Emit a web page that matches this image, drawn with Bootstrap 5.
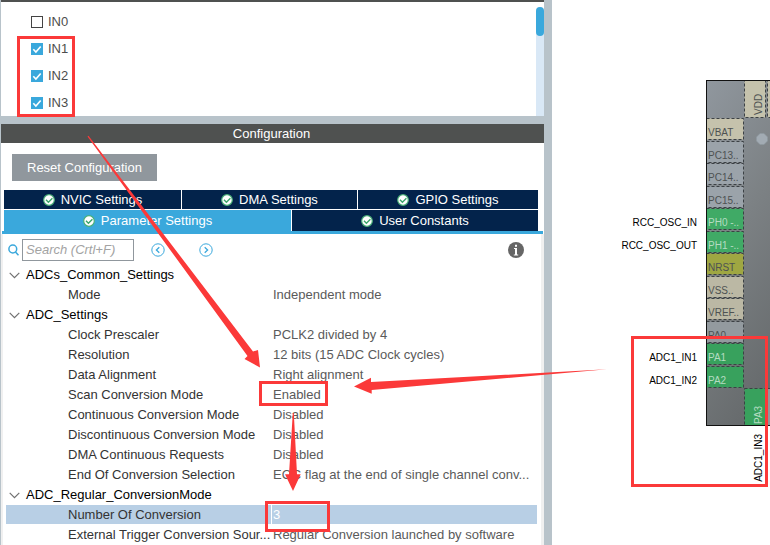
<!DOCTYPE html>
<html lang="en">
<head>
<meta charset="utf-8">
<meta name="viewport" content="width=device-width, initial-scale=1">
<title>ADC1 Configuration</title>
<link href="https://cdn.jsdelivr.net/npm/bootstrap@5.3.0/dist/css/bootstrap.min.css" rel="stylesheet">
<style>
  :root { --blue: #3aa8dc; --navy: #03234b; --frame: #b8c3ca; --bar: #4f5150; }
  body { font-family: "Liberation Sans", Arial, sans-serif; font-size: 13px; line-height: 20px; color: #4d4d4d; background: #fff; }
  .app { min-height: 100vh; }
  .config { border-left: 1px solid var(--frame); border-right: 8px solid var(--frame); }
  .channels { border-top: 2px solid var(--bar); border-bottom: 8px solid var(--frame); }
  .channel-list { padding: 6px 0 0 30px; }
  .channel { height: 27px; gap: 5px; }
  .channel .form-check-input { width: 12px; height: 12px; border: 1px solid #444; border-radius: 0; background-color: #fff; }
  .channel .form-check-input:checked { border-color: var(--blue); background-color: var(--blue);
    background-size: 12px 12px; background-image: url("data:image/svg+xml,%3csvg xmlns='http://www.w3.org/2000/svg' viewBox='0 0 12 12'%3e%3cpath fill='none' stroke='%23fff' stroke-width='1.6' d='M2.3 6.2l2.6 2.8 4.8-5.6'/%3e%3c/svg%3e"); }
  .scroll-track { width: 8px; margin-top: 5px; background: #d9e8f6; border-radius: 4px 4px 0 0; }
  .scroll-thumb { height: 29px; background: var(--blue); border-radius: 4px; }
  .title-bar { background: var(--bar); height: 19px; line-height: 19px; font-size: 13px; padding-right: 2px; }
  .reset { margin: 11px 0 9px 11px; height: 27px; padding: 0 15px; border: 0; border-radius: 0; background: #90979d; color: #fff; font-size: 13px; line-height: 27px; }
  .tab-grid { padding: 0 6px 0 3px; gap: 1px; }
  .tab-line { gap: 1px; }
  .tab-line button { border: 0; border-radius: 0; padding: 0; height: 19px; line-height: 19px; gap: 6px; background: var(--navy); color: #fff; font-size: 13px; }
  .tab-line .nvic { flex: 177 1 0; }
  .tab-line .dma { flex: 175 1 0; }
  .tab-line .gpio { flex: 180 1 0; }
  .tab-line.lower button { height: 21px; line-height: 21px; flex: 246 1 0; }
  .tab-line.lower button.active { flex: 287 1 0; background: var(--blue); }
  .tab-rule { height: 3px; margin: 0 1px; background: var(--blue); }
  .pane { border-left: 2px solid #f0f0f0; border-right: 3px solid #f0f0f0; padding: 0 4px 0 3px; }
  .tools { height: 31px; padding: 0 13px 0 2px; }
  .tools input { width: 112px; height: 22px; padding: 0 3px; border: 1px solid #90979d; border-radius: 0; font-size: 13px; font-style: italic; margin-left: 3px; }
  .tools input::placeholder { color: #a3a3a3; opacity: 1; }
  .tools button { border: 0; padding: 0; background: none; line-height: 0; }
  .prev { margin-left: 17px; }
  .next { margin-left: 34px; }
  .params { table-layout: fixed; width: 100%; margin: 0; border-collapse: separate; border-spacing: 0; }
  .params tr { height: 20px; }
  .params th, .params td { padding: 0; height: 20px; line-height: 20px; font-weight: 400; white-space: nowrap; }
  .params th[scope=row] { padding-left: 62px; color: #333; }
  .params td { color: #5a5a5a; padding-left: 2px; }
  .params .group { color: #000; }
  .group svg { margin: 0 6px 0 3px; vertical-align: 0; }
  .params .picked > * { background: #b8cfe5; background-clip: padding-box; border-bottom: 1px solid #fff; line-height: 19px; }
  .params .picked td { color: #fff; border-left: 1px solid #fff; padding-left: 1px; }
  .pinout { width: 218px; }
  .pinout text { font-size: 10px; }
  .marks { top: 0; left: 0; pointer-events: none; }
</style>
<script src="https://cdn.jsdelivr.net/npm/bootstrap@5.3.0/dist/js/bootstrap.bundle.min.js"></script>
</head>
<body>
<svg class="d-none" xmlns="http://www.w3.org/2000/svg">
  <symbol id="ok" viewBox="0 0 12 12"><circle cx="6" cy="6" r="5.3" fill="#fff" stroke="#4bb078" stroke-width="1.2"/><path d="M3 5.8l2.4 2.4 4-4" fill="none" stroke="#3ba56a" stroke-width="1.4"/></symbol>
  <symbol id="chev" viewBox="0 0 11 7"><path d="M.7 .8l4.8 4.9L10.300 .8" fill="none" stroke="#707070" stroke-width="1.2"/></symbol>
</svg>
<main class="app d-flex position-relative overflow-hidden">
  <section class="config flex-grow-1 d-flex flex-column">
    <div class="channels d-flex">
      <div class="channel-list flex-grow-1">
        <div class="channel d-flex align-items-center"><input class="form-check-input m-0" type="checkbox" id="in0"><label for="in0">IN0</label></div>
        <div class="channel d-flex align-items-center"><input class="form-check-input m-0" type="checkbox" id="in1" checked><label for="in1">IN1</label></div>
        <div class="channel d-flex align-items-center"><input class="form-check-input m-0" type="checkbox" id="in2" checked><label for="in2">IN2</label></div>
        <div class="channel d-flex align-items-center"><input class="form-check-input m-0" type="checkbox" id="in3" checked><label for="in3">IN3</label></div>
      </div>
      <div class="scroll-track"><div class="scroll-thumb"></div></div>
    </div>
    <h1 class="title-bar text-white text-center fw-normal m-0">Configuration</h1>
    <div><button type="button" class="reset btn">Reset Configuration</button></div>
    <div class="tab-grid d-flex flex-column">
      <div class="tab-line d-flex">
        <button type="button" class="nvic d-flex align-items-center justify-content-center"><svg width="12" height="12"><use href="#ok"/></svg>NVIC Settings</button>
        <button type="button" class="dma d-flex align-items-center justify-content-center"><svg width="12" height="12"><use href="#ok"/></svg>DMA Settings</button>
        <button type="button" class="gpio d-flex align-items-center justify-content-center"><svg width="12" height="12"><use href="#ok"/></svg>GPIO Settings</button>
      </div>
      <div class="tab-line lower d-flex">
        <button type="button" class="active d-flex align-items-center justify-content-center"><svg width="12" height="12"><use href="#ok"/></svg>Parameter Settings</button>
        <button type="button" class="d-flex align-items-center justify-content-center"><svg width="12" height="12"><use href="#ok"/></svg>User Constants</button>
      </div>
    </div>
    <div class="tab-rule"></div>
    <div class="pane flex-grow-1">
      <div class="tools d-flex align-items-center">
        <svg width="11" height="12" viewBox="0 0 11 12" fill="none" stroke="#3aa8dc" stroke-width="1.5"><circle cx="4.800" cy="5" r="3.900"/><path d="M7.500 7.900l3 3.300"/></svg>
        <input type="text" aria-label="Search" placeholder="Search (Crtl+F)">
        <button type="button" class="prev" aria-label="Previous"><svg width="14" height="14" viewBox="0 0 14 14" fill="none" stroke="#3aa8dc"><circle cx="7" cy="7" r="6.200"/><path d="M8.300 4.200L5.400 7l2.900 2.800" stroke-width="1.3"/></svg></button>
        <button type="button" class="next" aria-label="Next"><svg width="14" height="14" viewBox="0 0 14 14" fill="none" stroke="#3aa8dc"><circle cx="7" cy="7" r="6.200"/><path d="M5.700 4.200L8.600 7 5.700 9.800" stroke-width="1.3"/></svg></button>
        <button type="button" class="ms-auto" aria-label="Information"><svg width="16" height="16" viewBox="0 0 16 16"><circle cx="8" cy="8" r="8" fill="#666"/><path d="M7 2.700h2v2H7zM6 6h3v6.500h1.200v.9H5.800v-.9H7V7H6z" fill="#fff"/></svg></button>
      </div>
      <table class="params">
        <colgroup><col style="width:265px"><col></colgroup>
        <tbody>
          <tr><th class="group" colspan="2"><svg width="11" height="7"><use href="#chev"/></svg>ADCs_Common_Settings</th></tr>
          <tr><th scope="row">Mode</th><td>Independent mode</td></tr>
          <tr><th class="group" colspan="2"><svg width="11" height="7"><use href="#chev"/></svg>ADC_Settings</th></tr>
          <tr><th scope="row">Clock Prescaler</th><td>PCLK2 divided by 4</td></tr>
          <tr><th scope="row">Resolution</th><td>12 bits (15 ADC Clock cycles)</td></tr>
          <tr><th scope="row">Data Alignment</th><td>Right alignment</td></tr>
          <tr><th scope="row">Scan Conversion Mode</th><td>Enabled</td></tr>
          <tr><th scope="row">Continuous Conversion Mode</th><td>Disabled</td></tr>
          <tr><th scope="row">Discontinuous Conversion Mode</th><td>Disabled</td></tr>
          <tr><th scope="row">DMA Continuous Requests</th><td>Disabled</td></tr>
          <tr><th scope="row">End Of Conversion Selection</th><td>EOC flag at the end of single channel conv...</td></tr>
          <tr><th class="group" colspan="2"><svg width="11" height="7"><use href="#chev"/></svg>ADC_Regular_ConversionMode</th></tr>
          <tr class="picked"><th scope="row">Number Of Conversion</th><td>3</td></tr>
          <tr><th scope="row">External Trigger Conversion Sour...</th><td>Regular Conversion launched by software</td></tr>
        </tbody>
      </table>
    </div>
  </section>
  <section class="pinout flex-shrink-0" aria-label="Pinout view">
    <svg class="d-block" width="218" height="545" viewBox="552 0 218 545">
      <defs><linearGradient id="body" x1="0" y1="0" x2=".35" y2="1"><stop offset="0" stop-color="#90979e"/><stop offset=".5" stop-color="#7c8184"/><stop offset="1" stop-color="#686c6e"/></linearGradient></defs>
      <rect x="706.5" y="80.5" width="80" height="345" fill="url(#body)" stroke="#111"/>
      <path d="M760 133.500h4l3.500 3.500v4l-3.500 3.500h-4l-3.500-3.500v-4z" fill="#a2abb3" stroke="#8f989f" stroke-width=".6"/>
      <g stroke="#3c4145" stroke-dasharray="3 2">
        <rect x="706.5" y="118.500" width="37" height="21" fill="#c5c2ac"/>
        <rect x="706.5" y="141.500" width="37" height="21" fill="#9ba3aa"/>
        <rect x="706.5" y="163.500" width="37" height="21" fill="#9ba3aa"/>
        <rect x="706.5" y="186.500" width="37" height="21" fill="#9ba3aa"/>
        <rect x="706.5" y="208.500" width="37" height="21" fill="#40aa66"/>
        <rect x="706.5" y="231.500" width="37" height="21" fill="#40aa66"/>
        <rect x="706.5" y="253.500" width="37" height="21" fill="#9fa742"/>
        <rect x="706.5" y="276.500" width="37" height="21" fill="#bbb8a4"/>
        <rect x="706.5" y="298.500" width="37" height="21" fill="#bbb8a4"/>
        <rect x="706.5" y="321.500" width="37" height="21" fill="#939a9f"/>
        <rect x="706.5" y="343.500" width="37" height="21" fill="#38a15d"/>
        <rect x="706.5" y="366.500" width="37" height="21" fill="#38a15d"/>
        <rect x="744.5" y="80.500" width="21" height="37" fill="#c5c2ac"/>
        <rect x="767.5" y="80.500" width="21" height="37" fill="#c5c2ac"/>
        <rect x="744.5" y="388.500" width="21" height="37" fill="#38a15d"/>
        <rect x="767.5" y="388.500" width="21" height="37" fill="#92979a"/>
      </g>
      <g fill="#4e5252">
        <text x="708" y="136">VBAT</text><text x="708" y="159">PC13..</text><text x="708" y="181">PC14..</text><text x="708" y="204">PC15..</text>
        <text x="708" y="271">NRST</text><text x="708" y="294">VSS..</text><text x="708" y="316">VREF..</text><text x="708" y="339">PA0</text>
        <text transform="translate(762 115) rotate(-90)">VDD</text>
      </g>
      <g fill="#b4dcc1">
        <text x="708" y="226">PH0 -..</text><text x="708" y="249">PH1 -..</text><text x="708" y="361">PA1</text><text x="708" y="384">PA2</text>
        <text transform="translate(762 424) rotate(-90)">PA3</text>
      </g>
      <g fill="#000" text-anchor="end">
        <text x="697" y="226">RCC_OSC_IN</text><text x="697" y="249">RCC_OSC_OUT</text><text x="697" y="361">ADC1_IN1</text><text x="697" y="384">ADC1_IN2</text>
        <text transform="translate(762 434) rotate(-90)">ADC1_IN3</text>
      </g>
      <path d="M706.500 80v346M706 80.500h64M706 425.500h64" stroke="#111"/>
    </svg>
  </section>
  <svg class="marks position-absolute" width="770" height="545" viewBox="0 0 770 545" aria-hidden="true">
    <g fill="none" stroke="#fb3939" stroke-width="3">
      <rect x="18.500" y="37.500" width="55" height="78"/>
      <rect x="260.500" y="382.500" width="66" height="22"/>
      <rect x="266.500" y="502.500" width="62" height="28"/>
      <rect x="632.500" y="337.500" width="134" height="148"/>
    </g>
    <g fill="#fb3939">
      <path d="M87.500 136.500L88.500 135.800 253 351.500 258 350 260 367.500 244.500 359 247.500 356z"/>
      <path d="M607 369.300L371 382V377.700L354 386.500 371.700 393.700V390z"/>
      <path d="M292.800 413H293.800L297 474.300H300.700L293 491 285 474.300H289z"/>
    </g>
  </svg>
</main>
</body>
</html>
